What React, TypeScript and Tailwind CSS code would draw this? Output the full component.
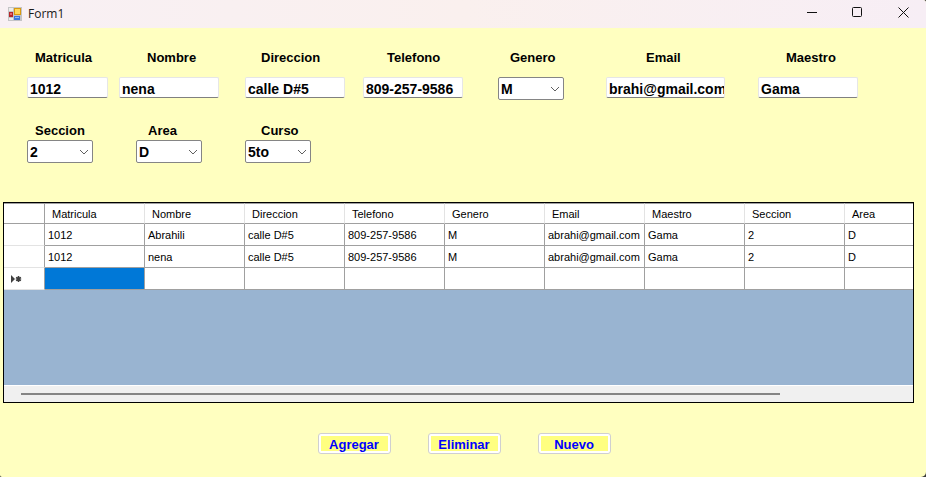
import React from "react";
import { clsx } from "clsx";

type Field = {
  id: string;
  label: string;
  value: string;
  kind: "text" | "select";
  width: string;
  indent: string;
};

const mainFields: Field[] = [
  { id: "matricula", label: "Matricula", value: "1012", kind: "text", width: "w-[81px]", indent: "pl-2" },
  { id: "nombre", label: "Nombre", value: "nena", kind: "text", width: "w-[100px]", indent: "pl-7" },
  { id: "direccion", label: "Direccion", value: "calle D#5", kind: "text", width: "w-[100px]", indent: "pl-4" },
  { id: "telefono", label: "Telefono", value: "809-257-9586", kind: "text", width: "w-[100px]", indent: "pl-6" },
  { id: "genero", label: "Genero", value: "M", kind: "select", width: "w-[66px]", indent: "pl-3" },
  { id: "email", label: "Email", value: "brahi@gmail.com", kind: "text", width: "w-[119px]", indent: "pl-10" },
  { id: "maestro", label: "Maestro", value: "Gama", kind: "text", width: "w-[100px]", indent: "pl-7" },
];

const classFields: Field[] = [
  { id: "seccion", label: "Seccion", value: "2", kind: "select", width: "w-[66px]", indent: "pl-2" },
  { id: "area", label: "Area", value: "D", kind: "select", width: "w-[66px]", indent: "pl-3" },
  { id: "curso", label: "Curso", value: "5to", kind: "select", width: "w-[66px]", indent: "pl-4" },
];

const columns = ["Matricula", "Nombre", "Direccion", "Telefono", "Genero", "Email", "Maestro", "Seccion", "Area"];

const rows = [
  ["1012", "Abrahili", "calle D#5", "809-257-9586", "M", "abrahi@gmail.com", "Gama", "2", "D"],
  ["1012", "nena", "calle D#5", "809-257-9586", "M", "abrahi@gmail.com", "Gama", "2", "D"],
];

function FieldBox({ field, gap }: { field: Field; gap: string }) {
  return (
    <div className={clsx("flex flex-col items-start", gap)}>
      <label htmlFor={field.id} className={clsx("text-[13px] leading-4 font-bold", field.indent)}>
        {field.label}
      </label>
      {field.kind === "text" ? (
        <input
          id={field.id}
          type="text"
          defaultValue={field.value}
          className={clsx(
            "h-[21px] rounded-[2px] border border-[#e6e6e6] border-b-[#808080] bg-white pt-[2px] pl-[2px] text-[14px] leading-4 font-bold outline-none",
            field.width,
          )}
        />
      ) : (
        <div className={clsx("grid h-[23px] items-center", field.width)}>
          <select
            id={field.id}
            defaultValue={field.value}
            className="col-start-1 row-start-1 h-full w-full appearance-none rounded-[2px] border border-[#858585] bg-white pl-[2px] text-[14px] leading-4 font-bold outline-none"
          >
            <option>{field.value}</option>
          </select>
          <svg
            className="pointer-events-none col-start-1 row-start-1 mr-1 justify-self-end"
            width="10"
            height="6"
            viewBox="0 0 10 6"
            fill="none"
            stroke="#606060"
            aria-hidden="true"
          >
            <path d="M1 1l4 4 4-4" />
          </svg>
        </div>
      )}
    </div>
  );
}

function FormIcon() {
  return (
    <svg width="14" height="14" viewBox="0 0 14 14" aria-hidden="true">
      <rect width="14" height="14" fill="#c4c4c6" />
      <rect x="1" y="1" width="4" height="3" fill="#ececec" />
      <rect x="1" y="11" width="4" height="2" fill="#ececec" />
      <rect x="1" y="5" width="4" height="5" fill="#b5262b" />
      <rect x="2" y="6" width="2" height="2" fill="#e7696a" />
      <rect x="6" y="1" width="7" height="7" fill="#d99a10" />
      <rect x="7" y="2" width="5" height="5" fill="#ffd75a" />
      <rect x="6" y="9" width="6" height="4" fill="#3c78dc" />
      <rect x="7" y="10" width="4" height="1" fill="#8fb9f5" />
    </svg>
  );
}

function TitleBar() {
  return (
    <header className="flex h-7 items-center bg-linear-to-r from-[#f8f0f4] via-[#faf0ee] to-[#f7eef5] pl-2">
      <FormIcon />
      <h1 className="ml-[6px] font-['Open_Sans','Noto_Sans',sans-serif] text-[12px] leading-4 text-[#1a1a1a]">Form1</h1>
      <div className="-mt-1 ml-auto flex">
        <button type="button" aria-label="Minimizar" className="flex h-6 w-[45px] items-center justify-center">
          <svg width="11" height="11" viewBox="0 0 11 11" stroke="#111" fill="none">
            <path d="M0 5.5h10" />
          </svg>
        </button>
        <button type="button" aria-label="Maximizar" className="flex h-6 w-[45px] items-center justify-center">
          <svg width="11" height="11" viewBox="0 0 11 11" stroke="#111" fill="none">
            <rect x=".5" y=".5" width="9" height="9" rx="1" />
          </svg>
        </button>
        <button type="button" aria-label="Cerrar" className="flex h-6 w-[46px] items-center justify-center">
          <svg width="11" height="11" viewBox="0 0 11 11" stroke="#111" fill="none">
            <path d="M.5.5l10 10M10.5.5l-10 10" />
          </svg>
        </button>
      </div>
    </header>
  );
}

function DataGrid() {
  const line = "border-r border-b border-[#a0a0a0] last:border-r-0";
  return (
    <section className="mt-[39px] mr-3 ml-[3px] flex h-[201px] flex-col overflow-hidden border border-black bg-[#99b4d1]">
      <table className="w-full table-fixed border-separate border-spacing-0 bg-white text-[11px] leading-4">
        <colgroup>
          <col className="w-[41px]" />
          {columns.map((name, i) => (
            <col key={name} className={i < columns.length - 1 ? "w-[100px]" : undefined} />
          ))}
        </colgroup>
        <thead>
          <tr className="h-[21px]">
            <th className="border-t border-r border-b border-t-[#a0a0a0] border-r-[#a0a0a0] border-b-[#a0a0a0] p-0" />
            {columns.map((name) => (
              <th
                key={name}
                scope="col"
                className="border-t border-r border-b border-t-[#a0a0a0] border-r-[#e3e3e3] border-b-[#a0a0a0] py-0 pr-0 pl-[7px] text-left font-normal last:border-r-0"
              >
                {name}
              </th>
            ))}
          </tr>
        </thead>
        <tbody>
          {rows.map((row, r) => (
            <tr key={r} className="h-[22px]">
              <td className="border-r border-b border-r-[#a0a0a0] border-b-[#e3e3e3] p-0" />
              {row.map((cell, c) => (
                <td key={c} className={clsx("py-0 pr-0 pl-[3px] whitespace-nowrap", line)}>
                  {cell}
                </td>
              ))}
            </tr>
          ))}
          <tr className="h-[22px]">
            <td className="border-r border-b border-r-[#a0a0a0] border-b-[#e3e3e3] py-0 pr-0 pl-[7px]">
              <svg width="11" height="8" viewBox="0 0 11 8" aria-hidden="true">
                <path d="M0 0l4 4-4 4z" fill="#404040" />
                <path
                  d="M7.500 1v6M5 2.500l5 3M10 2.500l-5 3"
                  stroke="#404040"
                  strokeWidth="1.600"
                  fill="none"
                />
              </svg>
            </td>
            {columns.map((name, c) => (
              <td key={name} className={clsx("p-0", line, c === 0 && "bg-[#0078d7]")} />
            ))}
          </tr>
        </tbody>
      </table>
      <div className="mt-auto flex h-[17px] items-center border-t border-white bg-[#f0f0f0] pr-[133px] pl-[17px]">
        <div className="h-[2px] flex-1 bg-[#858585]" />
      </div>
    </section>
  );
}

function ActionButton({ children }: { children: React.ReactNode }) {
  return (
    <button
      type="button"
      className="flex h-[21px] w-[73px] rounded-[3px] border border-[#d0d0d0] bg-white p-[2px] text-[13px] leading-[18px] font-bold text-[#0000ff]"
    >
      <span className="h-[15px] flex-1 bg-[#ffff80]">{children}</span>
    </button>
  );
}

export default function App() {
  return (
    <div className="bg-[#3a3a3a]">
      <main className="flex min-h-screen flex-col overflow-hidden rounded-tr-[3px] rounded-br-[5px] rounded-bl-[2px] bg-[#ffffc0] font-['Liberation_Sans',Arial,sans-serif] text-black">
        <TitleBar />
        <form onSubmit={(e) => e.preventDefault()}>
          <div className="mt-[22px] grid grid-cols-[92fr_126fr_118fr_135fr_108fr_152fr_168fr] pl-[27px]">
            {mainFields.map((field) => (
              <FieldBox key={field.id} field={field} gap="gap-[11px]" />
            ))}
          </div>
          <div className="mt-[23px] flex gap-[43px] pl-[27px]">
            {classFields.map((field) => (
              <FieldBox key={field.id} field={field} gap="gap-[1px]" />
            ))}
          </div>
          <DataGrid />
          <div className="mt-[30px] flex justify-center gap-[37px] pb-5 pl-[2px]">
            <ActionButton>Agregar</ActionButton>
            <ActionButton>Eliminar</ActionButton>
            <ActionButton>Nuevo</ActionButton>
          </div>
        </form>
      </main>
    </div>
  );
}
